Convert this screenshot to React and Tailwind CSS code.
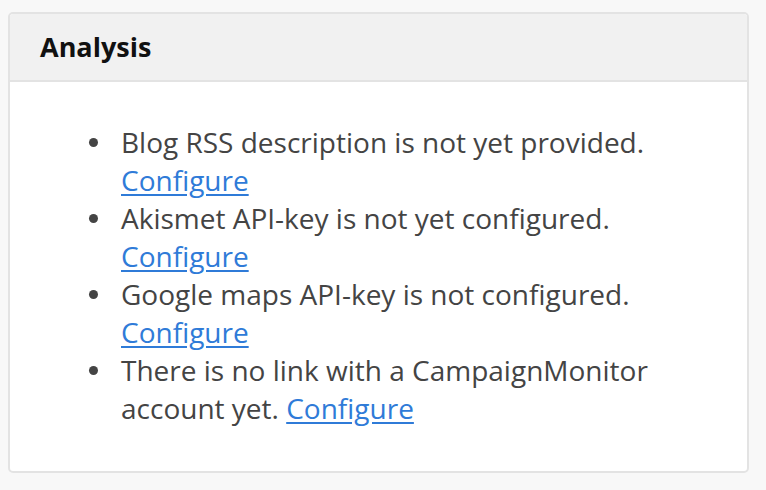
const items = [
  { text: "Blog RSS description is not yet provided." },
  { text: "Akismet API-key is not yet configured." },
  { text: "Google maps API-key is not configured." },
  { text: "There is no link with a CampaignMonitor account yet." },
];

export default function App() {
  return (
    <div
      className="min-h-screen bg-[#f8f8f8] pt-[12px] pl-[8px]"
      style={{ fontFamily: '"Open Sans", "Liberation Sans", sans-serif' }}
    >
      <div className="w-[741px] h-[461px] rounded-[5px] border-2 border-[#e3e3e3] bg-white overflow-hidden">
        {/* Header */}
        <div className="h-[68px] flex items-center px-[30px] bg-[#f1f1f1] border-b-2 border-[#e3e3e3]">
          <h2 className="text-[27px] font-bold text-[#111]">Analysis</h2>
        </div>

        {/* Body */}
        <ul className="pt-[41px] pl-[79px] pr-[40px]">
          {items.map((item) => (
            <li key={item.text} className="flex text-[28px] leading-[38px] text-[#444]">
              <span className="w-[32px] shrink-0 flex justify-start pt-[15px]">
                <span className="block w-[9px] h-[9px] rounded-full bg-[#444]" />
              </span>
              <span>
                {item.text}{" "}
                <a href="#" className="text-[#2f7bd8] underline underline-offset-[3px]">
                  Configure
                </a>
              </span>
            </li>
          ))}
        </ul>
      </div>
    </div>
  );
}
